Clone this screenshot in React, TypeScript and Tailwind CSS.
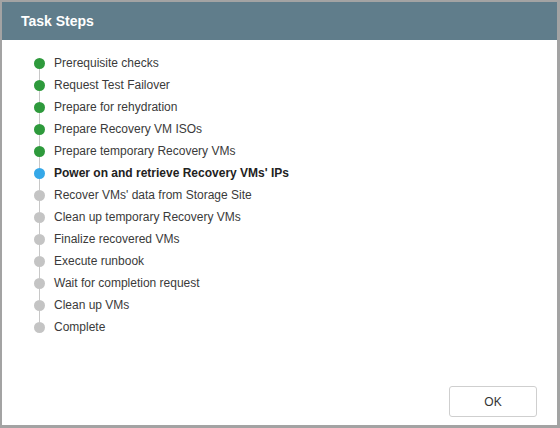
const steps: { label: string; state: 'done' | 'active' | 'pending' }[] = [
  { label: 'Prerequisite checks', state: 'done' },
  { label: 'Request Test Failover', state: 'done' },
  { label: 'Prepare for rehydration', state: 'done' },
  { label: 'Prepare Recovery VM ISOs', state: 'done' },
  { label: 'Prepare temporary Recovery VMs', state: 'done' },
  { label: "Power on and retrieve Recovery VMs' IPs", state: 'active' },
  { label: "Recover VMs' data from Storage Site", state: 'pending' },
  { label: 'Clean up temporary Recovery VMs', state: 'pending' },
  { label: 'Finalize recovered VMs', state: 'pending' },
  { label: 'Execute runbook', state: 'pending' },
  { label: 'Wait for completion request', state: 'pending' },
  { label: 'Clean up VMs', state: 'pending' },
  { label: 'Complete', state: 'pending' },
]

const dotColor = {
  done: 'bg-[#2e9a3c]',
  active: 'bg-[#35a8e8]',
  pending: 'bg-[#c4c4c4]',
}

export default function App() {
  return (
    <div className="w-[560px] h-[428px] bg-[#a3a3a3] pt-[2px] pl-[2px] pr-[3px] pb-[3px] font-['Liberation_Sans',Arial,sans-serif]">
      <div className="h-full bg-white flex flex-col">
        <div className="h-[38px] bg-[#607d8b] flex items-center px-[19px]">
          <span className="text-white font-bold text-[14px]">Task Steps</span>
        </div>
        <div className="flex-1 pt-[12px] pl-[32px]">
          {steps.map((s, i) => (
            <div key={s.label} className="flex items-stretch h-[22px]">
              <div className="w-[11px] flex flex-col items-center">
                <div className={`w-px flex-1 ${i === 0 ? '' : 'bg-[#c8c8c8]'}`} />
                <div className={`w-[11px] h-[11px] rounded-full shrink-0 ${dotColor[s.state]}`} />
                <div className={`w-px flex-1 ${i === steps.length - 1 ? '' : 'bg-[#c8c8c8]'}`} />
              </div>
              <span
                className={`ml-[9px] self-center text-[12px] leading-none ${
                  s.state === 'active' ? 'font-bold text-[#222]' : 'text-[#3a3a3a]'
                }`}
              >
                {s.label}
              </span>
            </div>
          ))}
        </div>
        <div className="flex justify-end pr-[20px] pb-[8px]">
          <button className="w-[88px] h-[31px] border border-[#cfcfcf] rounded-[3px] bg-white text-[12px] text-[#333]">
            OK
          </button>
        </div>
      </div>
    </div>
  )
}
